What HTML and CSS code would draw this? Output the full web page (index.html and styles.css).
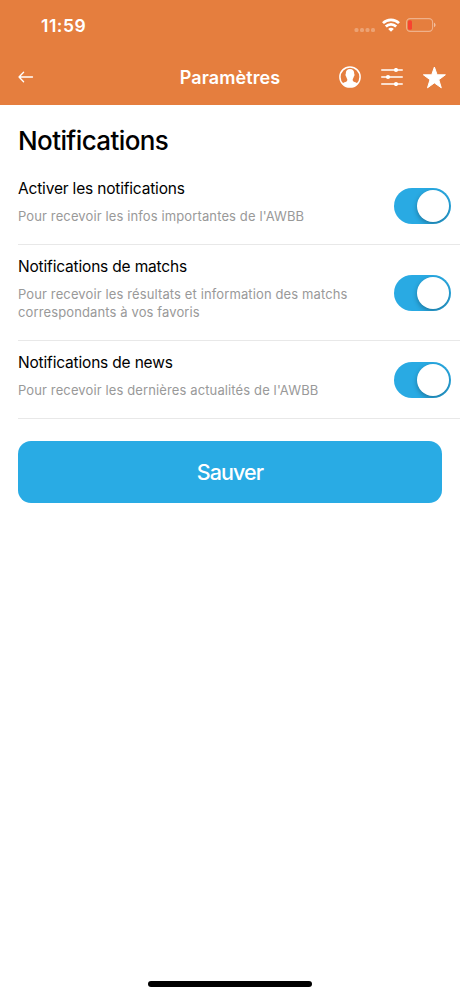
FILE: index.html
```html
<!doctype html>
<html lang="fr">
  <head>
    <meta charset="utf-8">
    <title>Paramètres</title>
    <meta name="viewport" content="width=device-width, initial-scale=1">
    <link rel="stylesheet" href="styles.css">
  </head>
  <body>
    <header>
      <div class="status">
        <span class="time">11:59</span>
        <svg class="signal" width="22" height="4" viewBox="0 0 22 4" fill="#fff" fill-opacity="0.28">
          <rect x="0.5" y="0" width="4" height="4" rx="1.5"/>
          <rect x="6" y="0" width="4" height="4" rx="1.5"/>
          <rect x="11.5" y="0" width="4" height="4" rx="1.5"/>
          <rect x="17" y="0" width="4" height="4" rx="1.5"/>
        </svg>
        <svg class="wifi" width="18" height="14" viewBox="0 0 18 14" fill="none" stroke="#fff" stroke-width="2.7">
          <path d="M1 5.100a11.400 11.400 0 0 1 16 0"/>
          <path d="M3.800 8.500a7.400 7.400 0 0 1 10.400 0"/>
          <path d="M9 13.800l-2.800-2.900a3.900 3.900 0 0 1 5.600 0z" fill="#fff" stroke="none"/>
        </svg>
        <svg class="battery" width="30" height="14" viewBox="0 0 30 14">
          <rect x="0.6" y="0.6" width="26" height="12.8" rx="3.6" fill="none" stroke="#fff" stroke-opacity="0.4" stroke-width="1.1"/>
          <rect x="2" y="2.2" width="4" height="9.6" rx="1.6" fill="#f8432f"/>
          <path d="M28 4.8c2 .7 2 3.7 0 4.4z" fill="#fff" fill-opacity="0.5"/>
        </svg>
      </div>
      <nav>
        <a class="back" href="#" aria-label="Retour">
          <svg width="16" height="12" viewBox="0 0 16 12" fill="none" stroke="#fff" stroke-width="1.3" stroke-linecap="round" stroke-linejoin="round">
            <path d="M14.500 6H1M5.600 1.200L1 6l4.600 4.800"/>
          </svg>
        </a>
        <h1>Paramètres</h1>
        <div class="actions">
          <svg width="22" height="22" viewBox="0 0 22 22">
            <circle cx="11" cy="11" r="10.1" fill="none" stroke="#fff" stroke-width="1.5"/>
            <path d="M11 3C8.300 3 6.600 4.800 6.800 7.500c0 .7-.5.700-.3 1.700.2 1 .6 1.100.8 1.700.2.900.7 1.500.9 2.200.2 1.100.1 1.900-.7 2.400-1.200.7-2.800.9-3.800 2A10 10 0 0 0 11 21a10 10 0 0 0 7.300-3.500c-1-1.100-2.600-1.300-3.800-2-.8-.5-.9-1.300-.7-2.400.2-.7.7-1.300.9-2.200.2-.6.6-.7.8-1.700.2-1-.3-1-.3-1.700C15.400 4.800 13.700 3 11 3z" fill="#fff"/>
          </svg>
          <svg width="22" height="18" viewBox="0 0 22 18" fill="#fff" stroke="#fff" stroke-width="1.6" stroke-linecap="round">
            <path d="M.8 2h20.400M.8 9h20.400M.8 16h20.400"/>
            <circle cx="15" cy="2" r="1.300"/>
            <circle cx="7" cy="9" r="1.300"/>
            <circle cx="15" cy="16" r="1.300"/>
          </svg>
          <svg width="24" height="23" viewBox="0 0 24 23" fill="#fff" stroke="#fff" stroke-width="1" stroke-linejoin="round">
            <path d="M12.400 1l2.700 7.800h8.300l-6.600 4.900 2.500 8.100-6.900-4.900-6.900 4.900 2.500-8.100L1.400 8.800h8.300z"/>
          </svg>
        </div>
      </nav>
    </header>

    <main>
      <h2>Notifications</h2>

      <div class="setting">
        <div class="label">
          <h3>Activer les notifications</h3>
          <p>Pour recevoir les infos importantes de l'AWBB</p>
        </div>
        <div class="switch"></div>
      </div>
      <div class="setting">
        <div class="label">
          <h3>Notifications de matchs</h3>
          <p>Pour recevoir les résultats et information des matchs<br>correspondants à vos favoris</p>
        </div>
        <div class="switch"></div>
      </div>
      <div class="setting">
        <div class="label">
          <h3>Notifications de news</h3>
          <p>Pour recevoir les dernières actualités de l'AWBB</p>
        </div>
        <div class="switch"></div>
      </div>

      <button class="save">Sauver</button>
    </main>

    <footer>
      <div class="home-bar"></div>
    </footer>
  </body>
</html>
```
FILE: styles.css
```css
body {
  display: flex;
  flex-direction: column;
  height: 996px;
  margin: 0;
  background-color: #fff;
  font-family: Inter, "Liberation Sans", sans-serif;
  color: #000;
}
header {
  box-sizing: border-box;
  height: 105px;
  background-color: #e57e3e;
  color: #fff;
}
.status {
  display: flex;
  align-items: center;
  height: 50px;
  padding: 1px 24px 0 41px;
  box-sizing: border-box;
}
.time {
  flex: 1;
  font-size: 17.5px;
  font-weight: 600;
  letter-spacing: 0.5px;
}
.signal {
  margin: 9px 6px 0 0;
}
.wifi {
  margin: -1px 6px 0 0;
}
.battery {
  margin-top: -1px;
}
nav {
  display: grid;
  grid-template-columns: 1fr auto 1fr;
  align-items: center;
  height: 54px;
  padding: 0 14px;
}
.back {
  display: flex;
  padding-left: 4px;
}
h1 {
  margin: 0;
  font-size: 18px;
  font-weight: 600;
  letter-spacing: 0.1px;
}
.actions {
  display: flex;
  align-items: center;
  justify-content: flex-end;
  gap: 20px;
}
.actions svg:last-child {
  margin-left: -1px;
}
main {
  flex: 1;
  padding-left: 18px;
}
h2 {
  margin: 0;
  padding: 20px 0 10px;
  font-size: 26px;
  line-height: 32px;
  font-weight: 500;
  letter-spacing: -0.6px;
}
.setting {
  display: flex;
  align-items: center;
  justify-content: space-between;
  padding: 12px 9px 19px 0;
  border-bottom: 1px solid #e8e8e8;
}
h3 {
  margin: 0 0 8px;
  font-size: 15.5px;
  line-height: 20px;
  font-weight: 400;
  letter-spacing: -0.18px;
}
.setting p {
  margin: 0;
  font-size: 13px;
  line-height: 18px;
  letter-spacing: 0.12px;
  color: #999;
}
.switch {
  box-sizing: border-box;
  width: 57px;
  height: 36px;
  margin-bottom: -7px;
  padding: 2px;
  border-radius: 18px;
  background-color: #29aae3;
  overflow: hidden;
}
.switch::after {
  content: "";
  display: block;
  width: 32px;
  height: 32px;
  margin-left: auto;
  border-radius: 50%;
  background-color: #fff;
  box-shadow: 0 2px 5px rgba(0, 0, 0, 0.3);
}
.save {
  display: block;
  width: 424px;
  height: 62px;
  margin-top: 22px;
  padding: 0;
  border: 0;
  border-radius: 13px;
  background-color: #29abe4;
  color: #fff;
  font-family: inherit;
  font-size: 21.5px;
  font-weight: 500;
  letter-spacing: -0.9px;
}
footer {
  display: flex;
  justify-content: center;
  padding-bottom: 9px;
}
.home-bar {
  width: 164px;
  height: 6px;
  border-radius: 3px;
  background-color: #000;
}
```
